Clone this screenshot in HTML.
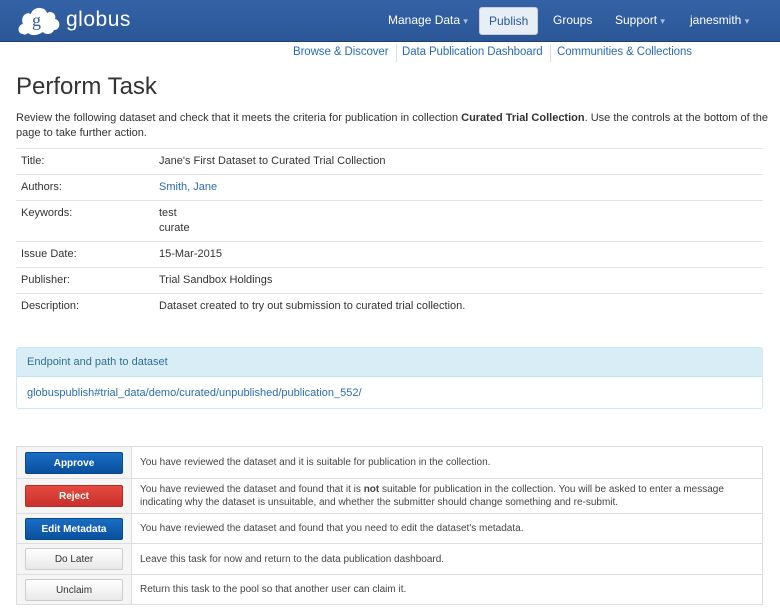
<!DOCTYPE html><html><head><style>
body{margin:0;width:780px;height:611px;overflow:hidden;font-family:"Liberation Sans",sans-serif;color:#333;background:#fff;font-size:11px}
.hdr{height:41px;background:linear-gradient(#3462a6,#2b5797);border-bottom:1px solid #1d3f73;position:relative}
.logo{position:absolute;left:16px;top:5px}
.logo span{position:absolute;left:50px;top:3px;color:#fff;font-size:21px;font-weight:300;letter-spacing:0.5px}
.nav{position:absolute;top:7px;color:#fff;font-size:12px;line-height:26px}
.nav b{font-weight:normal;opacity:.6;font-size:9px}
.pub{background:#e8eef6;color:#2b5797;border-radius:3px;padding:0 9px;border:1px solid #ccd}
.sub{position:absolute;top:46px;font-size:11.5px;color:#2a6cb0;letter-spacing:-0.1px}
.sep{position:absolute;top:44px;width:1px;height:18px;background:#ddd}
h1{position:absolute;left:16px;top:73px;margin:0;font-size:24px;font-weight:normal;color:#333}
.intro{position:absolute;left:16px;top:111px;width:762px;line-height:15px}
.meta{position:absolute;left:16px;top:148px;width:747px;border-collapse:collapse}
.meta td{border-top:1px solid #e3e3e3;padding:5px 5px 5px 5px;vertical-align:top;line-height:15px}
.meta td:first-child{width:128px}
.panel{position:absolute;left:16px;top:347px;width:745px;height:60px;border:1px solid #cfe6f4;border-radius:3px}
.ph{background:#d9edf7;height:28px;line-height:28px;padding-left:10px;color:#31708f;border-bottom:1px solid #bce8f1}
.pb{padding-left:10px;line-height:32px;color:#2a6cb0}
.act{position:absolute;left:16px;top:446px;width:747px;border-collapse:collapse;border:1px solid #ddd}
.act td{border:1px solid #ddd;padding:0 8px;font-size:10px;line-height:13px;color:#444}
.act td:first-child{background:#f5f5f5;width:98px;text-align:center}
.btn{display:block;height:22px;line-height:21px;border-radius:2px;font-weight:bold;font-size:10px;box-sizing:border-box}
.bl{background:linear-gradient(#1a6ec4,#0a4f9e);color:#fff;border:1px solid #084a8e}
.rd{background:linear-gradient(#e44a3e,#c9302c);color:#fff;border:1px solid #b52b27}
.wh{background:linear-gradient(#fff,#e8e8e8);color:#333;border:1px solid #ccc;font-weight:normal}
</style></head><body>
<div class="hdr">
<div class="logo"><svg width="46" height="32" viewBox="0 0 46 32"><path d="M7 29 C1 29 1 20 7 19 C4 12 10 6 15 9 C17 1 29 1 31 8 C35 5 41 9 39 14 C45 15 45 25 38 25 C36 30 29 30 27 27 C21 31 15 31 12 28 C10 30 8 30 7 29Z" fill="#fff"/><text x="16" y="21" font-family="Liberation Serif" font-size="18" fill="#2e5da0">g</text></svg><span>globus</span></div>
<div class="nav" style="left:388px">Manage Data <b>▾</b></div>
<div class="nav pub" style="left:479px;top:7px">Publish</div>
<div class="nav" style="left:553px">Groups</div>
<div class="nav" style="left:615px">Support <b>▾</b></div>
<div class="nav" style="left:690px">janesmith <b>▾</b></div>
</div>
<div class="sub" style="left:293px">Browse &amp; Discover</div><div class="sep" style="left:396px"></div>
<div class="sub" style="left:402px">Data Publication Dashboard</div><div class="sep" style="left:550px"></div>
<div class="sub" style="left:557px">Communities &amp; Collections</div>
<h1>Perform Task</h1>
<div class="intro">Review the following dataset and check that it meets the criteria for publication in collection <b>Curated Trial Collection</b>. Use the controls at the bottom of the page to take further action.</div>
<table class="meta">
<tr><td>Title:</td><td>Jane's First Dataset to Curated Trial Collection</td></tr>
<tr><td>Authors:</td><td style="color:#2a6cb0">Smith, Jane</td></tr>
<tr><td>Keywords:</td><td>test<br>curate</td></tr>
<tr><td>Issue Date:</td><td>15-Mar-2015</td></tr>
<tr><td>Publisher:</td><td>Trial Sandbox Holdings</td></tr>
<tr><td>Description:</td><td>Dataset created to try out submission to curated trial collection.</td></tr>
</table>
<div class="panel"><div class="ph">Endpoint and path to dataset</div><div class="pb">globuspublish#trial_data/demo/curated/unpublished/publication_552/</div></div>
<table class="act">
<tr style="height:32px"><td><span class="btn bl">Approve</span></td><td>You have reviewed the dataset and it is suitable for publication in the collection.</td></tr>
<tr style="height:35px"><td><span class="btn rd">Reject</span></td><td>You have reviewed the dataset and found that it is <b>not</b> suitable for publication in the collection. You will be asked to enter a message indicating why the dataset is unsuitable, and whether the submitter should change something and re-submit.</td></tr>
<tr style="height:30px"><td><span class="btn bl">Edit Metadata</span></td><td>You have reviewed the dataset and found that you need to edit the dataset's metadata.</td></tr>
<tr style="height:31px"><td><span class="btn wh">Do Later</span></td><td>Leave this task for now and return to the data publication dashboard.</td></tr>
<tr style="height:30px"><td><span class="btn wh">Unclaim</span></td><td>Return this task to the pool so that another user can claim it.</td></tr>
</table>
</body></html>
